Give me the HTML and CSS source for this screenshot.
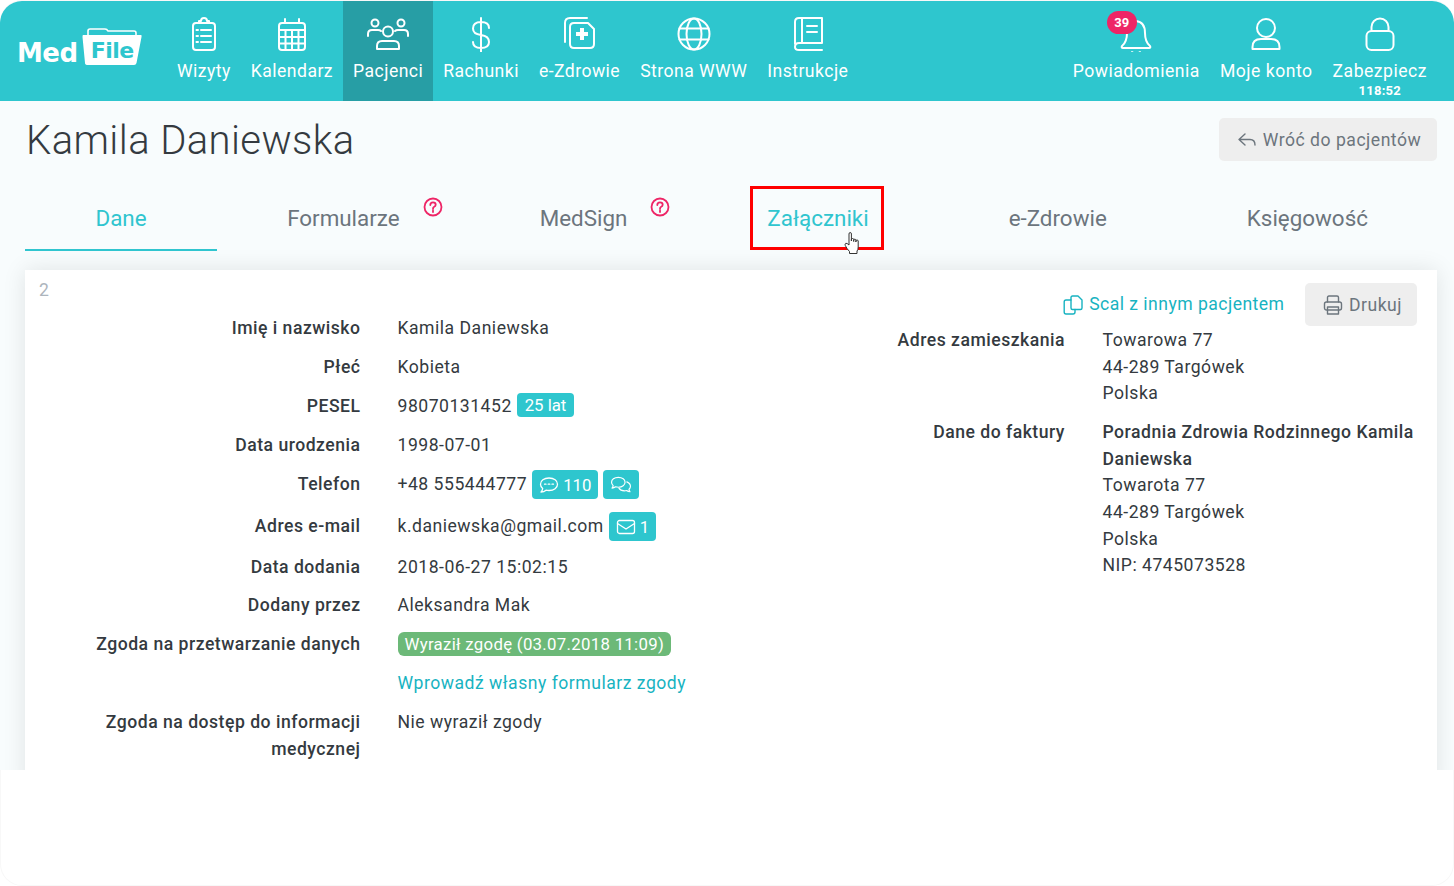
FILE: index.html
```html
<!DOCTYPE html>
<html lang="pl">

<head>
    <meta charset="UTF-8">
    <meta name="viewport" content="width=device-width, initial-scale=1.0">
    <title>Kamila Daniewska</title>
    <link rel="stylesheet" href="styles.css">
</head>

<body>
    <div class="app-frame">
        <header class="top-nav">
            <a class="logo">
                <span class="logo-med">Med</span>
                <span class="logo-folder">
                    <svg viewBox="0 0 60 38" width="60" height="38">
                        <path d="M6 7 V3 Q6 1 8 1 H23 Q25 1 26 3 H52 Q54 3 54 5 V7" fill="none" stroke="#fff" stroke-width="1.6"/>
                        <path d="M1 7 H59 Q60 7 59.500 9 L54.500 35 Q54 37 52 37 H6 Q3 37 3 35 L0.500 9 Q0.500 7 1 7 Z" fill="#fff"/>
                    </svg>
                    <span class="logo-file">File</span>
                </span>
            </a>
            <nav class="nav-group">
                <a class="nav-item">
                    <svg class="nav-icon" viewBox="0 0 36 36"><rect x="7" y="7" width="22" height="27" rx="3"/><path d="M13 7 V5 H15 A3 3 0 0 1 21 5 H23 V7"/><path d="M15 15 H25 M15 21 H25 M15 27 H25 M10.500 15 H12 M10.500 21 H12 M10.500 27 H12" transform="translate(0 -1)"/></svg>
                    <span>Wizyty</span>
                </a>
                <a class="nav-item">
                    <svg class="nav-icon" viewBox="0 0 36 36"><rect x="5" y="7" width="26" height="27" rx="3"/><path d="M11 3 V7 M25 3 V7 M5 14 H31 M5 21 H31 M5 27.500 H31 M11.500 14 V34 M18 14 V34 M24.500 14 V34"/></svg>
                    <span>Kalendarz</span>
                </a>
                <a class="nav-item active">
                    <svg class="nav-icon wide" viewBox="0 0 44 36"><circle cx="22" cy="15.500" r="5"/><path d="M11 33 V30 Q11 25 16 25 H28 Q33 25 33 30 V33 Z"/><circle cx="9" cy="7" r="3.500"/><circle cx="35" cy="7" r="3.500"/><path d="M2 20 V18 Q2 14 6 14 H12 Q14 14 15 15 M42 20 V18 Q42 14 38 14 H32 Q30 14 29 15"/></svg>
                    <span>Pacjenci</span>
                </a>
                <a class="nav-item">
                    <svg class="nav-icon" viewBox="0 0 36 36"><path d="M26 12 Q26 6 18 6 Q10 6 10 12.500 Q10 18 18 19 Q26 20 26 26 Q26 32 18 32 Q10 32 10 26 M18 2 V36"/></svg>
                    <span>Rachunki</span>
                </a>
                <a class="nav-item">
                    <svg class="nav-icon wide" viewBox="0 0 36 36"><path d="M3 26 V7 Q3 2 8 2 H25"/><path d="M12 7 H26 L32 13 V28 Q32 32 28 32 H12 Q8 32 8 28 V11 Q8 7 12 7 Z"/><path class="solid" d="M18 12 H22 V16 H26 V20 H22 V24 H18 V20 H14 V16 H18 Z"/></svg>
                    <span>e-Zdrowie</span>
                </a>
                <a class="nav-item">
                    <svg class="nav-icon" viewBox="0 0 36 36"><circle cx="18" cy="18" r="15.500"/><ellipse cx="18" cy="18" rx="7.500" ry="15.500"/><path d="M3.500 12.500 H32.500 M3.500 23.500 H32.500"/></svg>
                    <span>Strona WWW</span>
                </a>
                <a class="nav-item">
                    <svg class="nav-icon" viewBox="0 0 36 36"><path d="M5 28 V6 Q5 2 9 2 H32 V27 H9 Q5 27 5 31 Q5 34 9 34 H32"/><path d="M12 2 V27 M17 10 H27 M17 16 H27"/></svg>
                    <span>Instrukcje</span>
                </a>
            </nav>
            <nav class="nav-group nav-right">
                <a class="nav-item nav-bell">
                    <svg class="nav-icon" viewBox="0 0 36 36"><path d="M4 30 Q9 26 9 17 Q9 6 18 5 Q27 6 27 17 Q27 26 32 30 Q33 32 31 32 H5 Q3 32 4 30 Z"/><path d="M14 36 Q18 39 22 36"/></svg>
                    <span>Powiadomienia</span>
                    <span class="count-badge">39</span>
                </a>
                <a class="nav-item">
                    <svg class="nav-icon" viewBox="0 0 36 36"><circle cx="18" cy="12" r="9"/><path d="M4.500 33 V31 Q4.500 23 13 23 H23 Q31.500 23 31.500 31 V33 Z"/></svg>
                    <span>Moje konto</span>
                </a>
                <a class="nav-item nav-timer">
                    <svg class="nav-icon" viewBox="0 0 36 36"><rect x="4.500" y="15" width="27" height="19" rx="5"/><path d="M9.500 15 V11 A8.500 8.500 0 0 1 26.500 11 V15"/></svg>
                    <span>Zabezpiecz</span>
                    <span class="timer">118:52</span>
                </a>
            </nav>
        </header>

        <main class="page">
            <div class="page-head">
                <h1>Kamila Daniewska</h1>
                <button class="btn-grey btn-back">
                    <svg class="btn-icon" viewBox="0 0 20 20"><path d="M8 4 L2 9.500 L8 15 M2 9.500 H13 Q18 9.500 18 15"/></svg>
                    Wróć do pacjentów
                </button>
            </div>

            <div class="tabs">
                <a class="tab active">Dane</a>
                <a class="tab">Formularze
                    <svg class="tab-help" viewBox="0 0 20 20"><circle cx="10" cy="10" r="8.500"/><path d="M7.300 8 Q7.300 5.300 10 5.300 Q12.700 5.300 12.700 7.700 Q12.700 9.200 10.900 10 Q10 10.500 10 12"/><path d="M10 13.600 V15"/></svg>
                </a>
                <a class="tab">MedSign
                    <svg class="tab-help" viewBox="0 0 20 20"><circle cx="10" cy="10" r="8.500"/><path d="M7.300 8 Q7.300 5.300 10 5.300 Q12.700 5.300 12.700 7.700 Q12.700 9.200 10.900 10 Q10 10.500 10 12"/><path d="M10 13.600 V15"/></svg>
                </a>
                <a class="tab tab-hover">Załączniki
                    <span class="red-box"></span>
                    <svg class="hand-cursor" viewBox="0 0 16 24"><path d="M5 14 V3 Q5 1.500 6.200 1.500 Q7.400 1.500 7.400 3 V10 V8.500 Q7.400 7.500 8.500 7.500 Q9.700 7.500 9.700 8.500 V10.500 V9.200 Q9.700 8.200 10.800 8.200 Q11.900 8.200 11.900 9.200 V11 V10 Q11.900 9 13 9 Q14.200 9 14.200 10 V16 Q14.200 19 13 20 V22.500 H5.500 V20.500 Q3 18 1.300 14.500 Q0.600 12.800 1.800 12.300 Q3 12 5 14 Z"/></svg>
                </a>
                <a class="tab">e-Zdrowie</a>
                <a class="tab">Księgowość</a>
            </div>

            <section class="card">
                <div class="card-left">
                    <div class="card-id">2</div>
                    <div class="info-row"><div class="info-label">Imię i nazwisko</div><div class="info-value">Kamila Daniewska</div></div>
                    <div class="info-row"><div class="info-label">Płeć</div><div class="info-value">Kobieta</div></div>
                    <div class="info-row row-pesel"><div class="info-label">PESEL</div><div class="info-value">98070131452 <span class="badge badge-age">25 lat</span></div></div>
                    <div class="info-row"><div class="info-label">Data urodzenia</div><div class="info-value">1998-07-01</div></div>
                    <div class="info-row row-tall row-phone"><div class="info-label">Telefon</div><div class="info-value">+48 555444777 <span class="badge">
                        <svg class="badge-icon" viewBox="0 0 20 18"><path d="M10 2 C5 2 1.500 4.700 1.500 8.200 C1.500 10 2.300 11.400 3.700 12.500 C3.500 14 2.800 15.300 2 16 C4 16 5.800 15.300 7 14.200 C8 14.400 9 14.500 10 14.500 C15 14.500 18.500 11.700 18.500 8.200 C18.500 4.700 15 2 10 2 Z"/><path d="M5.500 8.200 H7 M9.200 8.200 H10.800 M13 8.200 H14.500"/></svg>
                        110</span> <span class="badge">
                        <svg class="badge-icon chat" viewBox="0 0 24 20"><path d="M9 1.500 C4.500 1.500 1.500 4 1.500 7 C1.500 8.500 2.200 9.700 3.300 10.700 C3.100 11.800 2.600 12.800 2 13.500 C3.700 13.300 5 12.700 6 12 C7 12.300 8 12.500 9 12.500 C13.500 12.500 16.500 10 16.500 7 C16.500 4 13.500 1.500 9 1.500 Z"/><path d="M18.500 6.500 C21 7.500 22.500 9.300 22.500 11.500 C22.500 12.800 21.900 14 20.900 14.800 C21 15.800 21.500 16.800 22 17.500 C20.500 17.300 19.200 16.800 18.300 16.100 C17.500 16.300 16.700 16.500 15.800 16.500 C13 16.500 10.700 15.300 9.700 13.500"/></svg>
                    </span></div></div>
                    <div class="info-row row-tall row-mail"><div class="info-label">Adres e-mail</div><div class="info-value">k.daniewska@gmail.com <span class="badge">
                        <svg class="badge-icon" viewBox="0 0 20 16"><rect x="1.500" y="1.500" width="17" height="13" rx="2"/><path d="M1.500 4.500 L10 10 L18.500 4.500"/></svg>
                        1</span></div></div>
                    <div class="info-row"><div class="info-label">Data dodania</div><div class="info-value">2018-06-27 15:02:15</div></div>
                    <div class="info-row"><div class="info-label">Dodany przez</div><div class="info-value">Aleksandra Mak</div></div>
                    <div class="info-row"><div class="info-label">Zgoda na przetwarzanie danych</div><div class="info-value"><span class="badge badge-green">Wyraził zgodę (03.07.2018 11:09)</span></div></div>
                    <div class="info-row"><div class="info-label"></div><div class="info-value"><a class="link">Wprowadź własny formularz zgody</a></div></div>
                    <div class="info-row"><div class="info-label">Zgoda na dostęp do informacji medycznej</div><div class="info-value">Nie wyraził zgody</div></div>
                </div>
                <div class="card-right">
                    <div class="card-actions">
                        <a class="link merge-link">
                            <svg class="btn-icon" viewBox="0 0 20 20"><path d="M8 2.500 Q8 1 9.500 1 H15 L19 5 V13 Q19 14.500 17.500 14.500 H9.500 Q8 14.500 8 13 Z"/><path d="M8 5 H3 Q1.200 5 1.200 7 V17 Q1.200 19 3 19 H10 Q12 19 12 17 V14.500"/></svg>
                            Scal z innym pacjentem
                        </a>
                        <button class="btn-grey btn-print">
                            <svg class="btn-icon" viewBox="0 0 20 20"><path d="M4.500 7 V2.500 Q4.500 1 6 1 H14 Q15.500 1 15.500 2.500 V7"/><rect x="1.500" y="7" width="17" height="8" rx="2"/><path d="M4.500 12 H15.500 V19 H4.500 Z"/></svg>
                            Drukuj
                        </button>
                    </div>
                    <div class="address-row"><div class="address-label">Adres zamieszkania</div><div class="address-value">Towarowa 77<br>44-289 Targówek<br>Polska</div></div>
                    <div class="address-row"><div class="address-label">Dane do faktury</div><div class="address-value"><b>Poradnia Zdrowia Rodzinnego Kamila Daniewska</b><br>Towarota 77<br>44-289 Targówek<br>Polska<br>NIP: 4745073528</div></div>
                </div>
            </section>
        </main>
    </div>
</body>

</html>
```

FILE: styles.css
```css
* {
    margin: 0;
    padding: 0;
    box-sizing: border-box;
}

body {
    font-family: Roboto, "Liberation Sans", sans-serif;
    background-color: #ffffff;
    color: #343a40;
    letter-spacing: 0.5px;
    overflow: hidden;
}

.app-frame {
    height: 886px;
    padding-top: 1px;
    border-radius: 22px;
    box-shadow: inset 0 0 0 1px #f8f8f8;
    overflow: hidden;
}

.top-nav {
    display: flex;
    height: 100px;
    background-color: #2ec6ce;
    border-radius: 22px 22px 0 0;
    color: #ffffff;
    padding-right: 17px;
}

.logo {
    width: 167px;
    flex-shrink: 0;
    display: flex;
    align-items: flex-start;
    padding: 27px 0 0 17px;
}

.logo-med {
    font-family: "DejaVu Sans", sans-serif;
    font-weight: 700;
    font-size: 26px;
    line-height: 28px;
    margin-top: 11px;
    letter-spacing: -0.5px;
}

.logo-folder {
    position: relative;
    margin-left: 4px;
    width: 60px;
    height: 38px;
}

.logo-file {
    position: absolute;
    left: 9px;
    top: 10px;
    font-family: "DejaVu Sans", sans-serif;
    font-weight: 700;
    font-size: 22px;
    line-height: 26px;
    color: #2ec6ce;
    letter-spacing: -0.5px;
}

.nav-group {
    display: flex;
}

.nav-right {
    margin-left: auto;
}

.nav-item {
    position: relative;
    display: flex;
    flex-direction: column;
    align-items: center;
    padding: 0 10px;
    font-size: 17.6px;
    line-height: 24px;
    letter-spacing: 0.46px;
    white-space: nowrap;
}

.nav-right .nav-item {
    letter-spacing: 0.5px;
}

.nav-item.active {
    background-color: #279ea5;
}

.nav-icon {
    width: 36px;
    height: 36px;
    margin: 15px 0 7px;
    fill: none;
    stroke: #ffffff;
    stroke-width: 2;
    stroke-linecap: round;
    stroke-linejoin: round;
    flex-shrink: 0;
}

.nav-icon.wide {
    width: 44px;
}

.nav-icon .solid {
    fill: #ffffff;
    stroke: none;
}

.count-badge {
    position: absolute;
    top: 10px;
    left: 44px;
    width: 30px;
    height: 23px;
    border-radius: 12px;
    background-color: #ee2566;
    font-size: 13px;
    line-height: 23px;
    font-weight: 700;
    text-align: center;
    letter-spacing: 0;
}

.timer {
    font-size: 13px;
    font-weight: 700;
    line-height: 16px;
    letter-spacing: 0.3px;
}

.page {
    height: 669px;
    background-color: #f8fcfd;
    overflow: hidden;
    padding: 0 17px 0 25px;
}

.page-head {
    display: flex;
    justify-content: space-between;
    align-items: flex-start;
    padding-top: 16px;
}

.page-head h1 {
    font-weight: 300;
    font-size: 40px;
    line-height: 48px;
    margin-left: 1px;
    letter-spacing: 0.4px;
    color: #343a40;
}

.btn-grey {
    display: flex;
    align-items: center;
    justify-content: center;
    border: none;
    border-radius: 5px;
    background-color: #eeeeee;
    color: #6c757d;
    font-family: inherit;
    font-size: 17.6px;
    letter-spacing: inherit;
}

.btn-back {
    width: 218px;
    height: 43px;
    margin-top: 1px;
    padding-left: 2px;
}

.btn-icon {
    width: 20px;
    height: 20px;
    margin-right: 6px;
    fill: none;
    stroke: currentColor;
    stroke-width: 1.400;
    stroke-linecap: round;
    stroke-linejoin: round;
    flex-shrink: 0;
}

.tabs {
    display: flex;
    margin-top: 21px;
}

.tab {
    position: relative;
    padding: 0 70px;
    height: 65px;
    font-size: 22.400px;
    line-height: 65px;
    letter-spacing: 0;
    color: #6c757d;
    white-space: nowrap;
}

.tab.active {
    padding: 0 70.500px;
    color: #30c5cf;
    border-bottom: 2px solid #30c5cf;
}

.tab-hover {
    color: #30c5cf;
}

.tab-help {
    position: absolute;
    top: 11px;
    right: 27px;
    width: 20px;
    height: 20px;
    fill: none;
    stroke: #ee2566;
    stroke-width: 1.800;
    stroke-linecap: round;
}

.red-box {
    position: absolute;
    left: 53px;
    top: 0;
    width: 134px;
    height: 64px;
    border: 3px solid #ff0000;
}

.hand-cursor {
    position: absolute;
    left: 147px;
    top: 45px;
    width: 16px;
    height: 24px;
    fill: #ffffff;
    stroke: #333333;
    stroke-width: 1;
    stroke-linejoin: round;
}

.card {
    display: flex;
    justify-content: space-between;
    height: 520px;
    margin-top: 19px;
    padding: 0 20px 0 14px;
    background-color: #ffffff;
    box-shadow: 0 0 22px rgba(0, 0, 0, 0.1);
    font-size: 17.6px;
    line-height: 26.4px;
}

.card-left {
    width: 700px;
}

.card-id {
    height: 38.500px;
    padding-top: 7px;
    color: #adb5bd;
}

.info-row {
    display: flex;
    align-items: baseline;
    padding: 6.250px 0;
}

.row-pesel {
    padding-bottom: 7px;
}

.row-phone {
    padding: 0.250px 0 6px;
}

.row-mail {
    padding: 1px 0 5.200px;
}

.info-label {
    width: 321.500px;
    margin-right: 37px;
    text-align: right;
    font-weight: 500;
}

.badge {
    display: inline-block;
    padding: 0 8px;
    height: 24px;
    line-height: 24px;
    border-radius: 4px;
    background-color: #2ec6ce;
    color: #ffffff;
    font-size: 16.800px;
    letter-spacing: 0;
    vertical-align: 1px;
}

.row-tall .badge {
    height: 29px;
    line-height: 30px;
    padding: 0 7px;
    margin: 5px 0 1px;
    vertical-align: -1px;
}

.badge-icon {
    width: 20px;
    height: 18px;
    vertical-align: -3px;
    fill: none;
    stroke: #ffffff;
    stroke-width: 1.300;
    stroke-linecap: round;
    stroke-linejoin: round;
}

.badge-icon.chat {
    width: 22px;
}

.badge-green {
    background-color: #6cb978;
    border-radius: 6px;
    padding: 0 7px;
    letter-spacing: 0.3px;
    vertical-align: 0;
}

.link {
    color: #17b3c1;
}

.card-right {
    width: 540px;
}

.card-actions {
    display: flex;
    justify-content: flex-end;
    align-items: center;
    gap: 20.500px;
    margin: 13px 0 1px;
    height: 43px;
}

.merge-link {
    display: flex;
    align-items: center;
    letter-spacing: 0.46px;
}

.btn-print {
    width: 112px;
    height: 43px;
    padding-left: 3px;
}

.address-row {
    display: flex;
    padding-bottom: 12.500px;
}

.address-label {
    width: 188px;
    margin-right: 37.500px;
    text-align: right;
    font-weight: 500;
    flex-shrink: 0;
}

.address-value {
    width: 316px;
    line-height: 26.600px;
}

.address-value b {
    font-weight: 500;
}
```
